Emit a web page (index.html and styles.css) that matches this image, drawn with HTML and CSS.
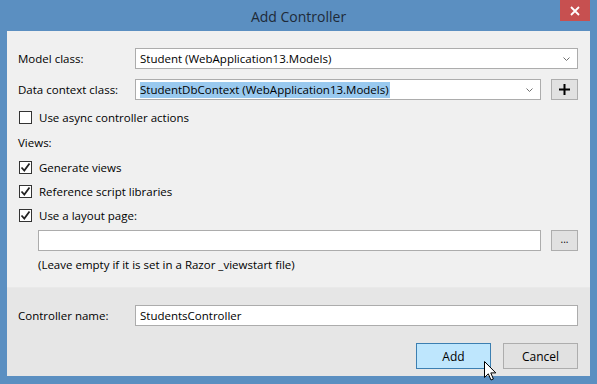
FILE: index.html
```html
<!DOCTYPE html>
<html lang="en">

<head>
  <meta charset="UTF-8">
  <title>Add Controller</title>
  <link rel="stylesheet" href="styles.css">
</head>

<body>
  <div class="window">
    <div class="titlebar">
      <span class="title">Add Controller</span>
      <div class="close">
        <svg width="10" height="10" viewBox="0 0 10 10"><path d="M1 1L9 9M9 1L1 9" stroke="#fff" stroke-width="1.8"/></svg>
      </div>
    </div>

    <div class="dialog">
      <div class="main">
        <div class="field">
          <span class="field-label">Model class:</span>
          <div class="combo">
            <span>Student (WebApplication13.Models)</span>
            <svg class="chevron" width="7" height="4" viewBox="0 0 7 4"><path d="M0.5 0.5L3.5 3.5L6.5 0.5" fill="none" stroke="#707070"/></svg>
          </div>
        </div>
        <div class="field">
          <span class="field-label">Data context class:</span>
          <div class="combo">
            <span class="selected">StudentDbContext (WebApplication13.Models)</span>
            <svg class="chevron" width="7" height="4" viewBox="0 0 7 4"><path d="M0.5 0.5L3.5 3.5L6.5 0.5" fill="none" stroke="#707070"/></svg>
          </div>
          <div class="small-btn">
            <svg width="11" height="11" viewBox="0 0 11 11"><path d="M5.5 0V11M0 5.5H11" stroke="#000" stroke-width="2"/></svg>
          </div>
        </div>

        <div class="check async">
          <span class="box"></span>
          <span>Use async controller actions</span>
        </div>

        <div class="group-label">Views:</div>

        <div class="check first">
          <span class="box"><svg width="11" height="11" viewBox="0 0 11 11"><path d="M1.5 5.5L4.3 8.5L9.5 1.5" fill="none" stroke="#222" stroke-width="1.8"/></svg></span>
          <span>Generate views</span>
        </div>
        <div class="check">
          <span class="box"><svg width="11" height="11" viewBox="0 0 11 11"><path d="M1.5 5.5L4.3 8.5L9.5 1.5" fill="none" stroke="#222" stroke-width="1.8"/></svg></span>
          <span>Reference script libraries</span>
        </div>
        <div class="check">
          <span class="box"><svg width="11" height="11" viewBox="0 0 11 11"><path d="M1.5 5.5L4.3 8.5L9.5 1.5" fill="none" stroke="#222" stroke-width="1.8"/></svg></span>
          <span>Use a layout page:</span>
        </div>

        <div class="path-row">
          <div class="textbox"></div>
          <div class="small-btn dots">...</div>
        </div>
        <div class="hint">(Leave empty if it is set in a Razor _viewstart file)</div>
      </div>

      <div class="footer">
        <div class="field">
          <span class="field-label">Controller name:</span>
          <div class="textbox">StudentsController</div>
        </div>
        <div class="actions">
          <div class="btn primary">Add</div>
          <div class="btn">Cancel</div>
        </div>
      </div>
    </div>

    <!-- mouse pointer over the Add button -->
    <svg class="cursor" width="13" height="20" viewBox="0 0 13 20"><path d="M0.5 0.5V16.5L4.3 12.8L7 19L9.4 18L6.8 11.9H11.8Z" fill="#fff" stroke="#000"/></svg>
  </div>
</body>

</html>
```

FILE: styles.css
```css
html,
body {
  margin: 0;
  padding: 0;
}

body {
  font-family: "Open Sans", "Noto Sans", sans-serif;
  font-size: 11.5px;
  color: #000;
}

.window {
  position: relative;
  width: 597px;
  height: 384px;
  box-sizing: border-box;
  padding: 0 7px 8px 7px;
  background: #5b8fc1;
  display: flex;
  flex-direction: column;
  overflow: hidden;
}

.titlebar {
  height: 31px;
  display: flex;
  align-items: center;
  justify-content: center;
  flex-shrink: 0;
}

.title {
  font-size: 14px;
  color: #1e2a38;
  margin-top: 1px;
}

.close {
  position: absolute;
  top: 0;
  right: 7px;
  width: 30px;
  height: 21px;
  background: #c75050;
  display: flex;
  align-items: center;
  justify-content: center;
}

.dialog {
  flex: 1;
  display: flex;
  flex-direction: column;
  background: #f0f0f0;
}

.main {
  padding: 17px 12px 0 11px;
  height: 256px;
  box-sizing: border-box;
}

.field {
  display: flex;
  align-items: center;
  height: 21px;
}

.field + .field {
  margin-top: 10px;
}

.field-label {
  width: 117px;
  flex-shrink: 0;
}

.combo,
.textbox {
  flex: 1;
  height: 21px;
  box-sizing: border-box;
  border: 1px solid #acacac;
  background: #fff;
  display: flex;
  align-items: center;
  padding-left: 4px;
}

.combo .selected {
  background: #99c9ef;
  line-height: 16px;
  padding-right: 1px;
}

.chevron {
  margin: 0 7px 0 auto;
  flex-shrink: 0;
}

.small-btn {
  width: 27px;
  height: 21px;
  box-sizing: border-box;
  margin-left: 10px;
  background: #e1e1e1;
  border: 1px solid #adadad;
  display: flex;
  align-items: center;
  justify-content: center;
  flex-shrink: 0;
}

.dots {
  font-size: 10px;
  line-height: 1;
  padding-bottom: 3px;
}

.check {
  display: flex;
  align-items: center;
  height: 14px;
  margin-top: 10px;
  padding-left: 1px;
}

.check.async {
  margin-top: 10px;
}

.check.first {
  margin-top: 9px;
}

.box {
  width: 13px;
  height: 13px;
  box-sizing: border-box;
  border: 1px solid #333;
  background: #fff;
  margin-right: 7px;
  display: flex;
  align-items: center;
  justify-content: center;
}

.group-label {
  margin-top: 11px;
  line-height: 16px;
}

.path-row {
  display: flex;
  align-items: center;
  margin-top: 8px;
  padding-left: 20px;
}

.path-row .textbox {
  height: 21px;
}

.hint {
  margin-top: 6px;
  padding-left: 20px;
  line-height: 16px;
}

.footer {
  flex: 1;
  background: #e6e6e6;
  border-top: 1px solid #e9e9e9;
  padding: 17px 12px 0 11px;
}

.actions {
  display: flex;
  justify-content: flex-end;
  gap: 12px;
  margin-top: 17px;
}

.btn {
  width: 75px;
  height: 26px;
  box-sizing: border-box;
  border: 1px solid #adadad;
  background: #e1e1e1;
  display: flex;
  align-items: center;
  justify-content: center;
  font-size: 12px;
}

.btn.primary {
  background: #bee6fd;
  border-color: #3c7fb1;
}

.cursor {
  position: absolute;
  left: 484px;
  top: 361px;
}
```
